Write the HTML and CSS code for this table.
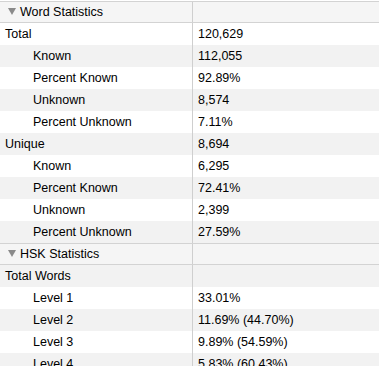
FILE: index.html
```html
<!DOCTYPE html>
<html>
<head>
<meta charset="utf-8">
<link rel="stylesheet" href="styles.css">
</head>
<body>
<div class="outline">
  <div class="row group first"><div class="c1"><span class="tri"></span>Word Statistics</div><div class="c2"></div></div>
  <div class="row odd"><div class="c1">Total</div><div class="c2">120,629</div></div>
  <div class="row even"><div class="c1 ind">Known</div><div class="c2">112,055</div></div>
  <div class="row odd"><div class="c1 ind">Percent Known</div><div class="c2">92.89%</div></div>
  <div class="row even"><div class="c1 ind">Unknown</div><div class="c2">8,574</div></div>
  <div class="row odd"><div class="c1 ind">Percent Unknown</div><div class="c2">7.11%</div></div>
  <div class="row even"><div class="c1">Unique</div><div class="c2">8,694</div></div>
  <div class="row odd"><div class="c1 ind">Known</div><div class="c2">6,295</div></div>
  <div class="row even"><div class="c1 ind">Percent Known</div><div class="c2">72.41%</div></div>
  <div class="row odd"><div class="c1 ind">Unknown</div><div class="c2">2,399</div></div>
  <div class="row even"><div class="c1 ind">Percent Unknown</div><div class="c2">27.59%</div></div>
  <div class="row group"><div class="c1"><span class="tri"></span>HSK Statistics</div><div class="c2"></div></div>
  <div class="row even"><div class="c1">Total Words</div><div class="c2"></div></div>
  <div class="row odd"><div class="c1 ind">Level 1</div><div class="c2">33.01%</div></div>
  <div class="row even"><div class="c1 ind">Level 2</div><div class="c2">11.69% (44.70%)</div></div>
  <div class="row odd"><div class="c1 ind">Level 3</div><div class="c2">9.89% (54.59%)</div></div>
  <div class="row even"><div class="c1 ind">Level 4</div><div class="c2">5.83% (60.43%)</div></div>
</div>
</body>
</html>
```

FILE: styles.css
```css
html, body {
  margin: 0;
  padding: 0;
  background: #ffffff;
}
body {
  font-family: "Liberation Sans", Arial, sans-serif;
  font-size: 12.5px;
  color: #000;
  overflow: hidden;
}
.outline {
  display: flex;
  flex-direction: column;
  padding-top: 1px;
}
.row {
  display: grid;
  grid-template-columns: 192px 1px 1fr;
  height: 22px;
  align-items: center;
}
.row::before {
  content: "";
  grid-column: 2;
  grid-row: 1;
  align-self: stretch;
  background: #cfcfcf;
}
.row .c1 { grid-column: 1; grid-row: 1; padding-left: 5px; padding-bottom: 1px; white-space: nowrap; }
.row .c2 { grid-column: 3; grid-row: 1; padding-left: 5px; padding-bottom: 1px; white-space: nowrap; }
.row .c1.ind { padding-left: 33px; }
.odd { background: #ffffff; }
.even { background: #f2f2f2; }
.group {
  background: #f5f5f5;
  border-top: 1px solid #d3d3d3;
  border-bottom: 1px solid #d3d3d3;
  height: 20px;
}
.group .c1 {
  padding-left: 8px;
  display: flex;
  align-items: center;
}
.tri {
  width: 0;
  height: 0;
  border-left: 4px solid transparent;
  border-right: 4px solid transparent;
  border-top: 7px solid #8a8a8a;
  margin-right: 4px;
}
```
